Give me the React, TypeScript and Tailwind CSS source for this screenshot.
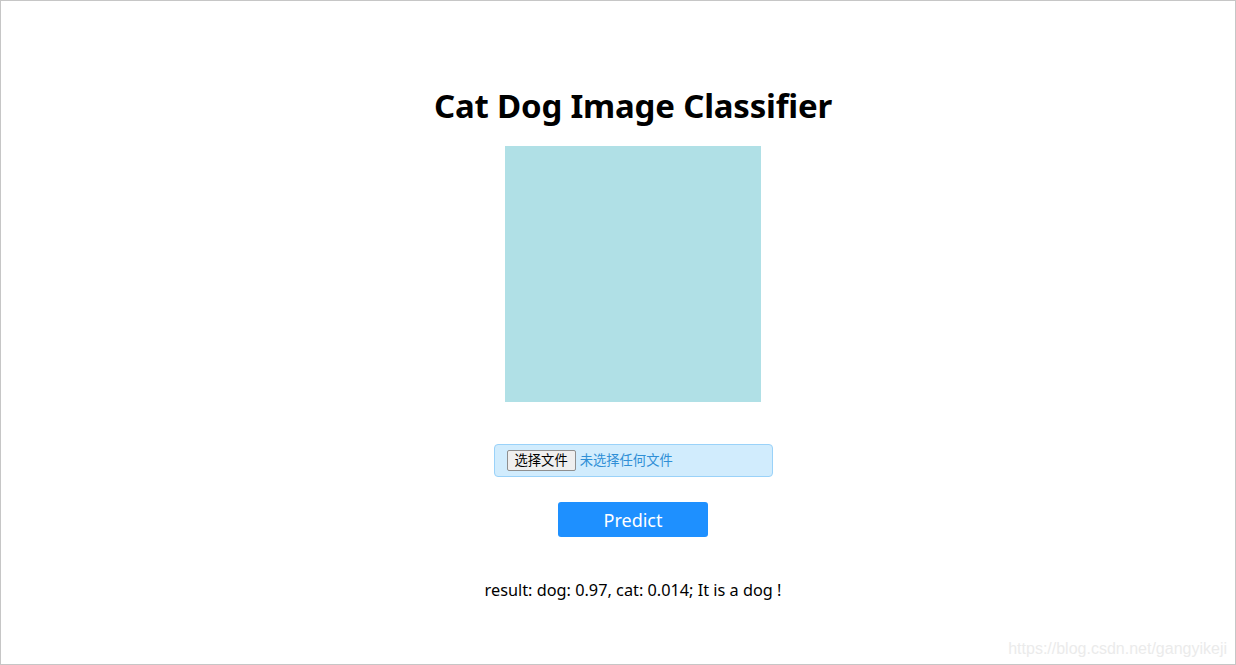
export default function App() {
  return (
    <div className="relative h-[665px] w-full overflow-hidden border border-[#c6c6c6] bg-white font-['Noto_Sans','Noto_Sans_CJK_SC',sans-serif] text-black">
      <main className="flex flex-col items-center pl-[30px] pt-[81px]">
        <h1 className="text-[33px] font-bold leading-[47px] tracking-[-0.2px]">Cat Dog Image Classifier</h1>

        <div className="mt-[17px] h-[256px] w-[256px] bg-[#b0e0e6]" />

        <label className="mt-[42px] flex h-[33px] w-[279px] cursor-pointer items-center gap-[4px] rounded-[4px] border border-[#9ad2f9] bg-[#d1ecfd] pl-[12px]">
          <span className="flex h-[21px] items-center rounded-[2px] border border-[#8f8f8f] bg-[#efefef] px-[7px] text-[13.3px] leading-none text-black">
            选择文件
          </span>
          <span className="text-[13.3px] leading-none text-[#2f8fd6]">未选择任何文件</span>
          <input type="file" className="hidden" />
        </label>

        <button className="mt-[25px] h-[35px] w-[150px] rounded-[3px] bg-[#1e90ff] pt-[1px] text-[18px] text-white">
          Predict
        </button>

        <p className="mt-[42px] text-[16.3px] leading-[22px]">result: dog: 0.97, cat: 0.014; It is a dog !</p>
      </main>

      <span className="absolute bottom-[6px] right-[8px] font-['Liberation_Sans',sans-serif] text-[16px] leading-[18px] text-[#ebebeb]">
        https://blog.csdn.net/gangyikeji
      </span>
    </div>
  );
}
